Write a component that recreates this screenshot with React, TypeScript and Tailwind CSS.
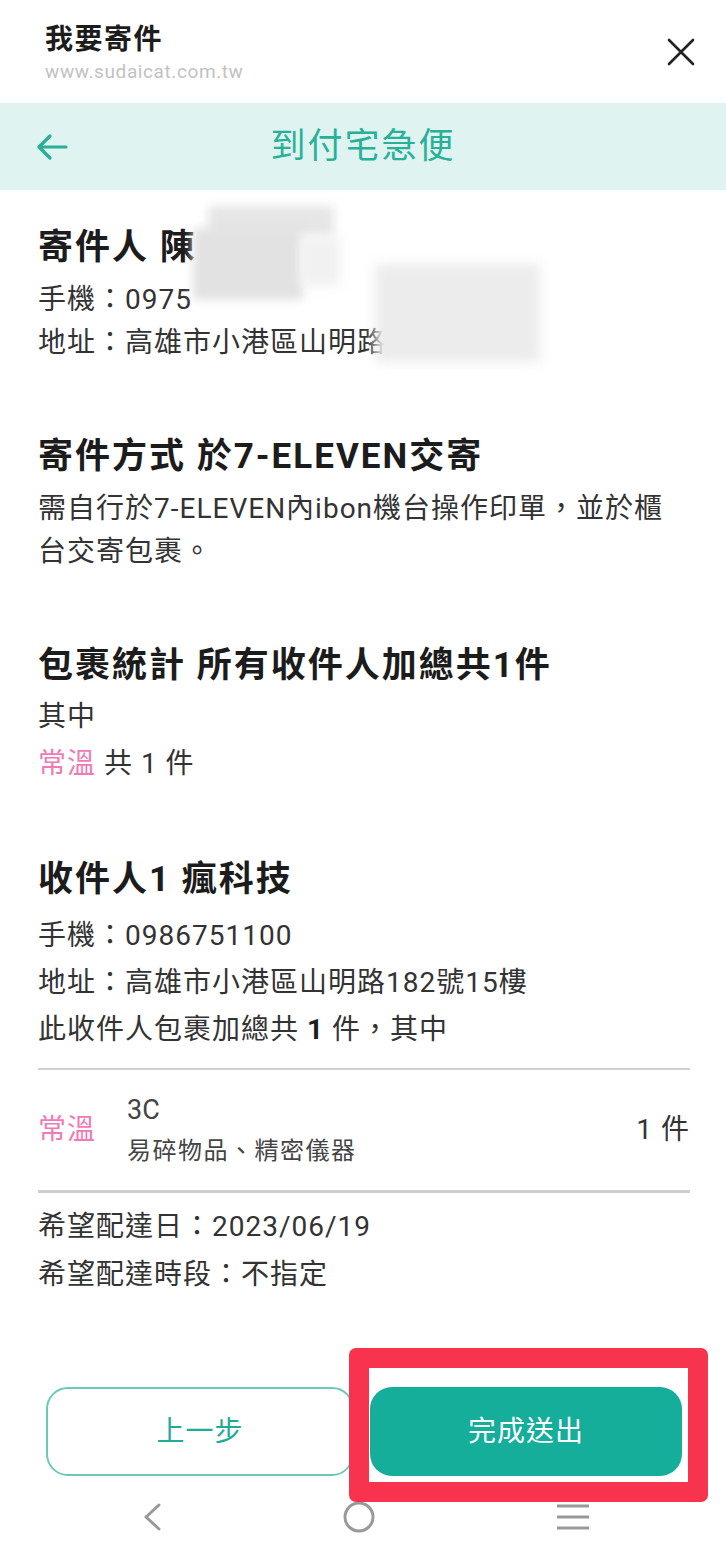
import React from 'react'

const FONT = { fontFamily: 'Roboto, "Noto Sans CJK TC", "Noto Sans CJK SC", sans-serif' }

function Heading({ children }: { children: React.ReactNode }) {
  return (
    <h2 className="h-[44px] text-[35px] leading-[44px] font-bold tracking-[2px] text-[#1c1c1c]">
      {children}
    </h2>
  )
}

function Redacted() {
  return (
    <>
      <div className="absolute left-[208px] top-[206px] w-[126px] h-[30px] bg-[#e6e6e6] blur-[5px]" />
      <div className="absolute left-[193px] top-[228px] w-[110px] h-[72px] bg-[#e2e2e2] blur-[5px]" />
      <div className="absolute left-[300px] top-[236px] w-[40px] h-[50px] bg-[#f1f1f1] blur-[6px]" />
      <div className="absolute left-[375px] top-[264px] w-[165px] h-[98px] bg-[#ececec] blur-[6px]" />
    </>
  )
}

export default function App() {
  return (
    <div className="relative w-[726px] h-[1555px] bg-white overflow-hidden text-[#333]" style={FONT}>
      {/* top bar */}
      <header className="h-[103px] flex items-start justify-between pl-[45px] pr-[30px]">
        <div className="pt-[22px]">
          <div className="text-[28px] leading-[36px] font-bold tracking-[1.5px] text-[#1c1c1c]">我要寄件</div>
          <div className="text-[19px] leading-[24px] mt-[2px] tracking-[0.6px] text-[#c2c2c2]">www.sudaicat.com.tw</div>
        </div>
        <svg className="mt-[37px]" width="30" height="30" viewBox="0 0 30 30" fill="none" stroke="#222" strokeWidth="2.6" strokeLinecap="round">
          <path d="M3 3 L27 27 M27 3 L3 27" />
        </svg>
      </header>

      <div className="h-[87px] bg-[#dff3f1] relative flex items-center justify-center">
        <svg className="absolute left-[36px] top-[30px]" width="32" height="28" viewBox="0 0 32 28" fill="none" stroke="#25b097" strokeWidth="3.2" strokeLinecap="round" strokeLinejoin="round">
          <path d="M30 14 H3 M14 3 L3 14 L14 25" />
        </svg>
        <span className="text-[35px] tracking-[2px] text-[#27b198] leading-none">到付宅急便</span>
      </div>

      <main className="pl-[38px] pr-[36px]">
        <section className="mt-[36px]">
          <Heading>寄件人 陳</Heading>
          <div className="mt-[8px] text-[28px] leading-[43px] tracking-[1px]">
            <p>手機：0975</p>
            <p>地址：高雄市小港區山明路</p>
          </div>
        </section>

        <section className="mt-[71px]">
          <Heading>寄件方式 於7-ELEVEN交寄</Heading>
          <div className="mt-[8px] text-[28px] leading-[43px] tracking-[1px]">
            <p>
              需自行於7-ELEVEN內ibon機台操作印單，並於櫃
              <br />
              台交寄包裹。
            </p>
          </div>
        </section>

        <section className="mt-[71px]">
          <Heading>包裹統計 所有收件人加總共1件</Heading>
          <div className="mt-[5px] text-[28px] leading-[47px] tracking-[1px]">
            <p>其中</p>
            <p>
              <span className="text-[#f07ab6]">常溫</span> 共 1 件
            </p>
          </div>
        </section>

        <section className="mt-[71px]">
          <Heading>收件人1 瘋科技</Heading>
          <div className="mt-[10px] text-[28px] leading-[47px] tracking-[1px]">
            <p>手機：0986751100</p>
            <p>地址：高雄市小港區山明路182號15樓</p>
            <p>
              此收件人包裹加總共 <b className="font-bold text-[#1c1c1c]">1</b> 件，其中
            </p>
          </div>

          <div className="mt-[15px] border-t-2 border-[#d0d0d0] border-b-[3px] border-b-[#cfcfcf] h-[125px] flex items-center">
            <span className="w-[89px] text-[28px] tracking-[1px] text-[#f07ab6]">常溫</span>
            <div className="flex-1 mt-[2px]">
              <div className="text-[27px] leading-[40px] text-[#444]">3C</div>
              <div className="text-[24px] leading-[42px] tracking-[1.5px] text-[#444]">易碎物品、精密儀器</div>
            </div>
            <span className="text-[28px] tracking-[1px] text-[#333]">1 件</span>
          </div>

          <div className="mt-[10px] text-[28px] leading-[48px] tracking-[1px]">
            <p>希望配達日：2023/06/19</p>
            <p>希望配達時段：不指定</p>
          </div>
        </section>
      </main>

      {/* action buttons */}
      <div className="mt-[88px] pl-[46px] pr-[44px] flex gap-[16px]">
        <button className="w-[308px] h-[89px] rounded-[22px] border-2 border-[#6cc9b8] bg-white text-[28px] tracking-[1px] text-[#22ab94]">
          上一步
        </button>
        <button className="w-[312px] h-[89px] rounded-[22px] bg-[#14ae9b] text-[28px] tracking-[1px] text-white">
          完成送出
        </button>
      </div>

      {/* system nav */}
      <nav className="mt-[21px] flex items-center justify-between pl-[142px] pr-[136px] h-[40px]">
        <svg width="20" height="30" viewBox="0 0 20 30" fill="none" stroke="#999" strokeWidth="3" strokeLinecap="round" strokeLinejoin="round">
          <path d="M17 3 L4 15 L17 27" />
        </svg>
        <svg width="34" height="34" viewBox="0 0 34 34" fill="none" stroke="#999" strokeWidth="3">
          <circle cx="17" cy="17" r="14" />
        </svg>
        <svg width="34" height="28" viewBox="0 0 34 28" fill="none" stroke="#999" strokeWidth="3">
          <path d="M1 3 H33 M1 14 H33 M1 25 H33" />
        </svg>
      </nav>

      {/* annotation + redaction overlays */}
      <div className="absolute left-[349px] top-[1348px] w-[359px] h-[154px] border-[20px] border-[#f7334d] rounded-[7px] pointer-events-none" />
      <Redacted />
    </div>
  )
}
